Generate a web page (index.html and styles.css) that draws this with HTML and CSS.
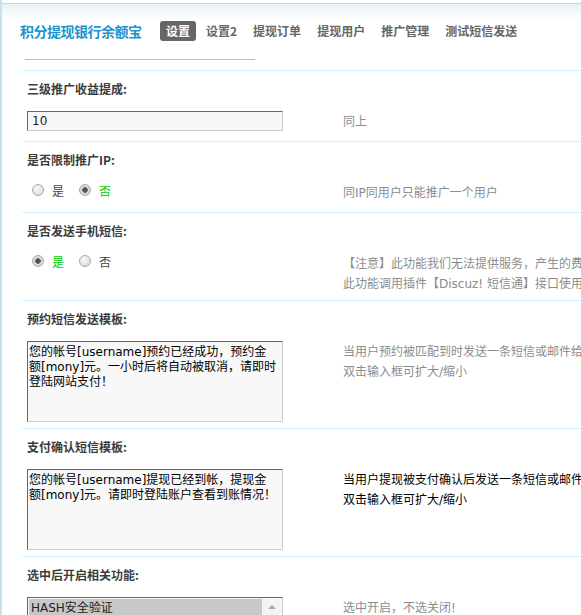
FILE: index.html
```html
<!DOCTYPE html>
<html lang="zh-CN">
<head>
    <meta charset="UTF-8">
    <title>积分提现银行余额宝 - 设置</title>
    <link rel="stylesheet" href="styles.css">
</head>
<body>
    <div class="page">
        <div class="header">
            <h3 class="title">积分提现银行余额宝</h3>
            <ul class="nav">
                <li class="current"><a href="#">设置</a></li>
                <li><a href="#">设置2</a></li>
                <li><a href="#">提现订单</a></li>
                <li><a href="#">提现用户</a></li>
                <li><a href="#">推广管理</a></li>
                <li><a href="#">测试短信发送</a></li>
            </ul>
        </div>
        <div class="header-line"></div>

        <div class="settings">
            <div class="setting">
                <div class="setting-title">三级推广收益提成:</div>
                <div class="setting-row">
                    <div class="field"><input type="text" class="txt" value="10"></div>
                    <div class="tips">同上</div>
                </div>
            </div>

            <div class="setting">
                <div class="setting-title">是否限制推广IP:</div>
                <div class="setting-row">
                    <div class="field radios">
                        <label class="radio"><input type="radio" name="limitip" value="1"><span>是</span></label>
                        <label class="radio"><input type="radio" name="limitip" value="0" checked><span>否</span></label>
                    </div>
                    <div class="tips">同IP同用户只能推广一个用户</div>
                </div>
            </div>

            <div class="setting">
                <div class="setting-title">是否发送手机短信:</div>
                <div class="setting-row">
                    <div class="field radios">
                        <label class="radio"><input type="radio" name="sendsms" value="1" checked><span>是</span></label>
                        <label class="radio"><input type="radio" name="sendsms" value="0"><span>否</span></label>
                    </div>
                    <div class="tips">【注意】此功能我们无法提供服务，产生的费用由站长自行承担<br>此功能调用插件【Discuz! 短信通】接口使用</div>
                </div>
            </div>

            <div class="setting">
                <div class="setting-title">预约短信发送模板:</div>
                <div class="setting-row">
                    <div class="field"><textarea class="tarea">您的帐号[username]预约已经成功，预约金额[mony]元。一小时后将自动被取消，请即时登陆网站支付！</textarea></div>
                    <div class="tips">当用户预约被匹配到时发送一条短信或邮件给用户<br>双击输入框可扩大/缩小</div>
                </div>
            </div>

            <div class="setting">
                <div class="setting-title">支付确认短信模板:</div>
                <div class="setting-row">
                    <div class="field"><textarea class="tarea">您的帐号[username]提现已经到帐，提现金额[mony]元。请即时登陆账户查看到账情况！</textarea></div>
                    <div class="tips dark">当用户提现被支付确认后发送一条短信或邮件给用户<br>双击输入框可扩大/缩小</div>
                </div>
            </div>

            <div class="setting">
                <div class="setting-title">选中后开启相关功能:</div>
                <div class="setting-row">
                    <div class="field">
                        <div class="listbox">
                            <div class="options">
                                <div class="option selected">HASH安全验证</div>
                                <div class="option">推广链接验证</div>
                                <div class="option">短信发送记录</div>
                            </div>
                            <div class="scrollbar"><span class="arrow"></span></div>
                        </div>
                    </div>
                    <div class="tips">选中开启，不选关闭!</div>
                </div>
            </div>
        </div>
    </div>
</body>
</html>
```

FILE: styles.css
```css
* {
    margin: 0;
    padding: 0;
    box-sizing: border-box;
}

html, body {
    height: 100%;
    overflow: hidden;
}

body {
    font-family: "DejaVu Sans", "Noto Sans CJK SC", sans-serif;
    font-size: 12px;
    color: #333;
    background: #fff;
}

.page {
    min-height: 100%;
    border-left: 2px solid #c9dfec;
    overflow: hidden;
}

/* 顶部标题和菜单 */
.header {
    display: flex;
    align-items: center;
    margin-top: 3px;
    padding: 17px 0 0 18px;
    border-top: 1px solid #bfd6e4;
    background: linear-gradient(#e8f1f8, #fff 16px);
}

.title {
    width: 140px;
    flex: none;
    font-family: "Noto Sans CJK SC", sans-serif;
    font-size: 14px;
    line-height: 20px;
    font-weight: bold;
    color: #1b94cd;
    white-space: nowrap;
    letter-spacing: -0.5px;
}

.nav {
    display: flex;
    list-style: none;
    white-space: nowrap;
}

.nav li {
    margin-right: 4px;
}

.nav a {
    display: block;
    padding: 0 6px;
    line-height: 20px;
    font-family: "Noto Sans CJK SC", sans-serif;
    font-weight: bold;
    color: #666;
    text-decoration: none;
    border-radius: 3px;
}

.nav .current a {
    background: #666;
    color: #fff;
}

.header-line {
    width: 230px;
    height: 1px;
    margin: 18px 0 0 23px;
    background: #bdbdbd;
}

/* 设置项 */
.settings {
    margin: 10px 0 0 20px;
}

.setting-title {
    border-top: 1px dotted #bfdff0;
    padding: 8px 0 12px 5px;
    line-height: 20px;
    font-weight: bold;
    color: #3c3c3c;
    font-family: "Noto Sans CJK SC", sans-serif;
}

.setting-row {
    display: flex;
    padding: 0 0 6px 5px;
    min-height: 30px;
}

.field {
    width: 316px;
    flex: none;
}

.tips {
    padding-top: 1px;
    line-height: 20px;
    color: #8c8c8c;
    white-space: nowrap;
}

.tips.dark {
    color: #000;
}

.txt,
.tarea,
.listbox {
    width: 256px;
    border: 1px solid;
    border-color: #666 #ccc #ccc #666;
    background: #f8f8f8;
    font-family: "DejaVu Sans", "Noto Sans CJK SC", sans-serif;
    font-size: 12px;
    color: #222;
}

.txt {
    height: 20px;
    padding: 0 4px;
}

.tarea {
    display: block;
    height: 81px;
    padding: 3px 4px 3px 1px;
    line-height: 15px;
    resize: none;
    overflow: hidden;
    color: #000;
}

.radios {
    display: flex;
    align-items: center;
    height: 16px;
    padding-left: 5px;
}

.radio {
    display: flex;
    align-items: center;
    margin-right: 15px;
    color: #444;
    font-family: "Noto Sans CJK SC", sans-serif;
}

.radio input {
    appearance: none;
    -webkit-appearance: none;
    width: 12px;
    height: 12px;
    margin-right: 8px;
    border: 1px solid #aaa;
    border-radius: 50%;
    background: radial-gradient(circle at 40% 35%, #fafafa, #d4d4d4);
}

.radio input:checked {
    background: radial-gradient(circle, #555 0 2.5px, #ddd 3px, #d0d0d0);
}

.radio input:checked + span {
    color: #00cc00;
}

.listbox {
    display: flex;
    height: 80px;
    padding: 1px;
}

.options {
    flex: 1;
}

.option {
    padding-left: 2px;
    line-height: 18px;
    color: #222;
}

.option.selected {
    background: #c8c8c8;
}

.scrollbar {
    width: 19px;
    flex: none;
    background: #f4f4f4;
    position: relative;
}

.arrow {
    position: absolute;
    top: 6px;
    left: 6px;
    border: 4px solid transparent;
    border-top: none;
    border-bottom: 4px solid #a8a8a8;
}
```
